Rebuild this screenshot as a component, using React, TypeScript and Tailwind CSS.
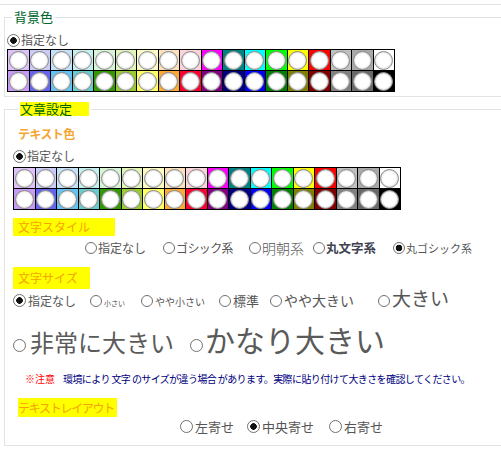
import type { ReactNode } from "react";

const LIGHT = [
  "bg-[#dcc2f8]", "bg-[#cbcbf7]", "bg-[#c5e1f7]", "bg-[#c3efee]", "bg-[#d7f5d5]", "bg-[#e1f5bb]",
  "bg-[#fcfbc3]", "bg-[#fce1bd]", "bg-[#fbd3db]", "bg-[#ff00ff]", "bg-[#008080]", "bg-[#00ffff]",
  "bg-[#00ff00]", "bg-[#ffff00]", "bg-[#ff0000]", "bg-[#c0c0c0]", "bg-[#a9a9a9]", "bg-[#ffffff]",
];

const DARK = [
  "bg-[#c79bf5]", "bg-[#6565f1]", "bg-[#65c3f1]", "bg-[#66cccc]", "bg-[#339900]", "bg-[#99cc33]",
  "bg-[#ffff66]", "bg-[#ffaa33]", "bg-[#ff0033]", "bg-[#800080]", "bg-[#000080]", "bg-[#0000ff]",
  "bg-[#008000]", "bg-[#808000]", "bg-[#800000]", "bg-[#808080]", "bg-[#696969]", "bg-[#000000]",
];

function Radio({ checked = false, size = "h-[12px] w-[12px]" }: { checked?: boolean; size?: string }) {
  return (
    <span
      className={`block shrink-0 rounded-full border border-[#707070] ${size} ${
        checked ? "bg-[radial-gradient(circle,#111_3px,#fff_3.6px)]" : "bg-white"
      }`}
    />
  );
}

function ColorGrid() {
  return (
    <div className="grid w-[388px] grid-cols-[repeat(18,minmax(0,1fr))] gap-px border border-black bg-black">
      {[...LIGHT, ...DARK].map((bg, i) => (
        <div key={i} className={`flex h-[20px] items-center justify-center ${bg}`}>
          <span className="h-[19px] w-[19px] rounded-full border-[1.5px] border-[#8a8a8a] bg-white shadow-[inset_0_0_2px_rgba(0,0,0,0.35)]" />
        </div>
      ))}
    </div>
  );
}

function Marker({ children, className }: { children: ReactNode; className: string }) {
  return (
    <div className={`flex items-center bg-[#ffff00] text-[12px] leading-none text-[#f5a300] ${className}`}>
      {children}
    </div>
  );
}

function NoneRow() {
  return (
    <div className="flex h-[16px] items-center gap-[1px] text-[12px] leading-none text-[#555]">
      <Radio checked size="h-[13px] w-[13px]" />
      <span>指定なし</span>
    </div>
  );
}

const STYLES = [
  { label: "指定なし", w: "w-[78px]", text: "text-[12px] text-[#555]" },
  { label: "ゴシック系", w: "w-[86px]", text: "text-[12px] text-[#555] tracking-[-0.6px]" },
  { label: "明朝系", w: "w-[64px]", text: "text-[14px] font-light text-[#555]" },
  { label: "丸文字系", w: "w-[80px]", text: "text-[12.5px] font-bold text-[#3f4450]" },
  { label: "丸ゴシック系", w: "", text: "text-[11px] text-[#555]", checked: true },
];

const SIZES = [
  { label: "指定なし", w: "w-[77px]", text: "text-[12px]", checked: true },
  { label: "小さい", w: "w-[51px]", text: "text-[7px]" },
  { label: "やや小さい", w: "w-[78px]", text: "text-[10px]" },
  { label: "標準", w: "w-[51px]", text: "text-[13px]" },
  { label: "やや大きい", w: "w-[108px]", text: "text-[14px]" },
  { label: "大きい", w: "", text: "text-[19px]" },
];

const LAYOUTS = [
  { label: "左寄せ", w: "w-[67px]" },
  { label: "中央寄せ", w: "w-[82px]", checked: true },
  { label: "右寄せ", w: "" },
];

export default function App() {
  return (
    <div className="h-[452px] w-[501px] overflow-hidden bg-white font-['Noto_Sans_CJK_JP','Noto_Sans',sans-serif]">
      <div className="h-[5px] border-b border-[#e3e3e3]" />

      <fieldset className="mt-[5px] ml-[4px] w-[540px] border border-[#e3e3e3] pb-[4px] pl-[2px]">
        <legend className="ml-[5px] px-[2px] text-[13px] leading-[14px] text-[#00662e]">背景色</legend>
        <div className="pt-[8px]">
          <NoneRow />
        </div>
        <div className="mt-[1px]">
          <ColorGrid />
        </div>
      </fieldset>

      <fieldset className="mt-[5px] ml-[4px] w-[540px] border border-[#e3e3e3] pb-[11px] pl-[8px]">
        <legend className="ml-[5px] px-[2px] text-[13px] leading-[14px]">
          <span className="inline-block bg-[#ffff00] pr-[17px] text-[#006400]">文章設定</span>
        </legend>

        <div className="mt-[10px] h-[16px] pl-[5px] text-[12px] leading-[16px] font-bold tracking-[-0.6px] text-[#f5a530]">
          テキスト色
        </div>
        <div className="mt-[6px]">
          <NoneRow />
        </div>
        <div className="mt-[3px]">
          <ColorGrid />
        </div>

        <Marker className="mt-[8px] h-[18px] w-[102px] pl-[5px]">文字スタイル</Marker>
        <div className="mt-[4px] flex h-[16px] items-center pl-[72px] leading-none">
          {STYLES.map((s) => (
            <div key={s.label} className={`flex items-center gap-[1px] ${s.w}`}>
              <Radio checked={s.checked} />
              <span className={s.text}>{s.label}</span>
            </div>
          ))}
        </div>

        <Marker className="mt-[11px] h-[22px] w-[77px] pl-[5px]">文字サイズ</Marker>
        <div className="-mt-[1px] flex items-baseline leading-none text-[#555]">
          {SIZES.map((s) => (
            <div key={s.label} className={`flex items-baseline gap-[2px] ${s.w}`}>
              <span className="translate-y-px">
                <Radio checked={s.checked} size={s.label === "指定なし" ? "h-[13px] w-[13px]" : "h-[12px] w-[12px]"} />
              </span>
              <span className={s.text}>{s.label}</span>
            </div>
          ))}
        </div>
        <div className="mt-[17px] flex items-baseline leading-none text-[#5a5a5a]">
          <div className="flex w-[177px] items-baseline gap-[4px]">
            <Radio size="h-[13px] w-[13px]" />
            <span className="text-[24px]">非常に大きい</span>
          </div>
          <div className="flex items-baseline gap-[2px]">
            <Radio size="h-[13px] w-[13px]" />
            <span className="text-[30px]">かなり大きい</span>
          </div>
        </div>

        <div className="mt-[19px] flex h-[12px] items-center pl-[12px] text-[10px] leading-[12px]">
          <span className="text-[#ff0000]">※注意</span>
          <span className="ml-[8px] tracking-[-0.6px] text-[#000080]">
            環境により 文字 のサイズが違う場合 があります。実際に貼り付けて大きさを確認してください。
          </span>
        </div>

        <Marker className="mt-[13px] ml-[5px] h-[19px] w-[99px] tracking-[-1.3px]">テキストレイアウト</Marker>
        <div className="mt-[1px] flex h-[16px] items-center pl-[167px] text-[13px] leading-none text-[#555]">
          {LAYOUTS.map((l) => (
            <div key={l.label} className={`flex items-center gap-[2px] ${l.w}`}>
              <Radio checked={l.checked} size="h-[13px] w-[13px]" />
              <span>{l.label}</span>
            </div>
          ))}
        </div>
      </fieldset>
    </div>
  );
}
